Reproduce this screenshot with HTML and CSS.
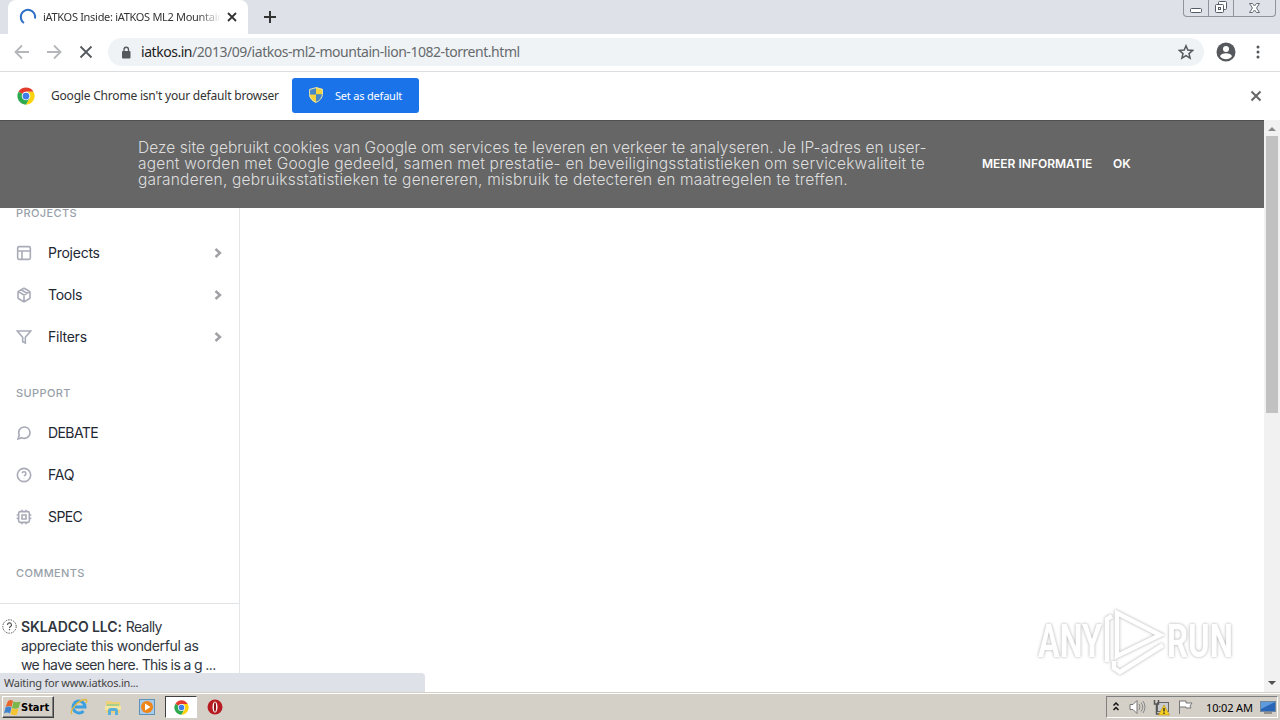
FILE: index.html
```html
<!DOCTYPE html>
<html lang="nl">
<head>
    <meta charset="UTF-8">
    <meta name="viewport" content="width=device-width, initial-scale=1.0">
    <title>iATKOS Inside: iATKOS ML2 Mountain Lion</title>
    <link rel="stylesheet" href="styles.css">
</head>
<body>
    <!-- Shared icon shapes -->
    <svg class="defs" width="0" height="0">
        <symbol id="chrome" viewBox="0 0 48 48">
            <circle cx="24" cy="24" r="23" fill="#fff"/>
            <path d="M24 24 4.1 12.5A23 23 0 0 1 43.9 12.5H24z" fill="#e33b2e"/>
            <path d="M24 24 4.1 12.5A23 23 0 0 0 24 47L34 29.8z" fill="#2da94f"/>
            <path d="M24 12.5h19.9A23 23 0 0 1 24 47l10-17.2z" fill="#fdd20a"/>
            <circle cx="24" cy="24" r="11.5" fill="#fff"/>
            <circle cx="24" cy="24" r="9" fill="#3f7ee8"/>
        </symbol>
        <symbol id="chevron" viewBox="0 0 8 10">
            <path d="M1.5 1 6 5 1.5 9" fill="none" stroke="#a0a0a5" stroke-width="2.4"/>
        </symbol>
    </svg>

    <header class="tab-strip">
        <div class="tab">
            <svg class="spinner" width="18" height="18" viewBox="0 0 18 18"><path d="M5 15A7.2 7.2 0 1 1 16 10.5" fill="none" stroke="#2f6fc6" stroke-width="2"/></svg>
            <span class="tab-title">iATKOS Inside: iATKOS ML2 Mountain</span>
            <svg width="10" height="10" viewBox="0 0 10 10"><path d="M1 1l8 8M9 1 1 9" stroke="#333" stroke-width="1.8"/></svg>
        </div>
        <svg class="new-tab" width="14" height="14" viewBox="0 0 14 14"><path d="M7 1v12M1 7h12" stroke="#333" stroke-width="2"/></svg>
        <div class="window-buttons">
            <span><svg width="14" height="7" viewBox="0 0 14 7"><rect x="1.5" y="1.5" width="11" height="4" rx="1" fill="#fff" stroke="#555b66"/></svg></span>
            <span><svg width="14" height="14" viewBox="0 0 14 14" fill="#fff" stroke="#555b66"><rect x="4.5" y="1.5" width="8" height="8" rx="1"/><rect x="1.5" y="4.5" width="8" height="8" rx="1"/><rect x="4.5" y="7.5" width="2" height="2"/></svg></span>
            <span class="win-close"><svg width="13" height="12" viewBox="0 0 13 12"><path d="M1.5 1.5h3l2 2.5 2-2.500h3L8.500 6l3 4.500h-3l-2-2.500-2 2.500h-3l3-4.500z" fill="#fff" stroke="#666b75"/></svg></span>
        </div>
    </header>

    <div class="toolbar">
        <svg width="16" height="16" viewBox="0 0 16 16"><path d="M15 8H2M8 1.5 1.5 8 8 14.5" fill="none" stroke="#b4b6b9" stroke-width="1.8"/></svg>
        <svg width="16" height="16" viewBox="0 0 16 16"><path d="M1 8h13M8 1.5 14.5 8 8 14.5" fill="none" stroke="#b4b6b9" stroke-width="1.8"/></svg>
        <svg width="16" height="16" viewBox="0 0 16 16"><path d="M2.5 2.5l11 11M13.5 2.5l-11 11" stroke="#55585c" stroke-width="1.8"/></svg>
        <div class="address">
            <svg width="10" height="13" viewBox="0 0 10 13"><rect x="1" y="5" width="8.5" height="7.5" rx="1" fill="#55585c"/><path d="M3 5.5V3.5a2.25 2.25 0 0 1 4.5 0v2" fill="none" stroke="#55585c" stroke-width="1.3"/></svg>
            <span class="url"><b>iatkos.in</b>/2013/09/iatkos-ml2-mountain-lion-1082-torrent.html</span>
            <svg width="16" height="16" viewBox="0 0 16 16"><path d="M8 1.8l1.8 4.3 4.7.4L11 9.6l1.1 4.6L8 11.7l-4.1 2.5L5 9.6 1.5 6.5l4.7-.4z" fill="none" stroke="#55585c" stroke-width="1.5"/></svg>
        </div>
        <svg class="profile" width="20" height="20" viewBox="0 0 20 20"><circle cx="10" cy="10" r="9.5" fill="#55585c"/><circle cx="10" cy="7" r="3" fill="#fff"/><path d="M4 14.2c1-4 11-4 12 0A7.3 7.3 0 0 1 4 14.2z" fill="#fff"/></svg>
        <svg class="dots" width="4" height="14" viewBox="0 0 4 14" fill="#55585c"><circle cx="2" cy="2" r="1.5"/><circle cx="2" cy="7" r="1.5"/><circle cx="2" cy="12" r="1.5"/></svg>
    </div>

    <div class="infobar">
        <svg width="18" height="18"><use href="#chrome"/></svg>
        <span class="infobar-text">Google Chrome isn't your default browser</span>
        <button class="default-button">
            <svg width="14" height="16" viewBox="0 0 14 16"><path d="M7 0 14 2v5.5H7z" fill="#f6d33c"/><path d="M7 0 0 2v5.5h7z" fill="#4687c8"/><path d="M0 7.5h7V16C3 14 .5 11.5 0 7.5z" fill="#f6d33c"/><path d="M14 7.5H7V16c4-2 6.5-4.5 7-8.5z" fill="#4687c8"/><path d="M7 .7 13.4 2.5v5C13.2 11 11 13.5 7 15.4 3 13.5.8 11 .6 7.5v-5z" fill="none" stroke="#e5e2b0" stroke-width="1"/></svg>
            <span>Set as default</span>
        </button>
        <svg class="infobar-close" width="12" height="12" viewBox="0 0 12 12"><path d="M1.5 1.5l9 9M10.5 1.5l-9 9" stroke="#666" stroke-width="2"/></svg>
    </div>

    <main class="viewport">
        <div class="page">
            <div class="cookie-bar">
                <p class="cookie-text">
                    <span class="c1">Deze site gebruikt cookies van Google om services te leveren en verkeer te analyseren. Je IP-adres en user-</span><br>
                    <span class="c2">agent worden met Google gedeeld, samen met prestatie- en beveiligingsstatistieken om servicekwaliteit te</span><br>
                    <span class="c3">garanderen, gebruiksstatistieken te genereren, misbruik te detecteren en maatregelen te treffen.</span>
                </p>
                <a class="more">MEER INFORMATIE</a>
                <a class="ok">OK</a>
            </div>

            <aside class="sidebar">
                <h3>PROJECTS</h3>
                <nav>
                    <a>
                        <svg width="16" height="16" viewBox="0 0 24 24"><rect x="2.5" y="2.5" width="19" height="19" rx="2"/><path d="M2.5 9h19M9 21.5V9"/></svg>
                        <span>Projects</span><svg class="chevron" width="8" height="10"><use href="#chevron"/></svg>
                    </a>
                    <a>
                        <svg width="16" height="16" viewBox="0 0 24 24"><path d="M21 16V8a2 2 0 0 0-1-1.7l-7-4a2 2 0 0 0-2 0l-7 4A2 2 0 0 0 3 8v8a2 2 0 0 0 1 1.7l7 4a2 2 0 0 0 2 0l7-4a2 2 0 0 0 1-1.7zM3.3 7l8.7 5 8.7-5M12 22V12M7.5 4.2l9 5.2"/></svg>
                        <span>Tools</span><svg class="chevron" width="8" height="10"><use href="#chevron"/></svg>
                    </a>
                    <a>
                        <svg width="16" height="16" viewBox="0 0 24 24"><path d="M22 3H2l8 9.5V19l4 2v-8.5z"/></svg>
                        <span>Filters</span><svg class="chevron" width="8" height="10"><use href="#chevron"/></svg>
                    </a>
                </nav>
                <h3>SUPPORT</h3>
                <nav>
                    <a>
                        <svg width="16" height="16" viewBox="0 0 24 24"><path d="M21 11.5a8.4 8.4 0 0 1-.9 3.8 8.500 8.500 0 0 1-7.600 4.700 8.400 8.400 0 0 1-3.800-.9L3 21l1.900-5.700a8.400 8.400 0 0 1-.9-3.800 8.500 8.500 0 0 1 4.700-7.600 8.400 8.400 0 0 1 3.800-.9h.5a8.500 8.500 0 0 1 8 8z"/></svg>
                        <span class="caps">DEBATE</span>
                    </a>
                    <a>
                        <svg width="16" height="16" viewBox="0 0 24 24"><circle cx="12" cy="12" r="10"/><path d="M9.1 9a3 3 0 0 1 5.8 1c0 2-3 3-3 3M12 17v.2"/></svg>
                        <span>FAQ</span>
                    </a>
                    <a>
                        <svg width="16" height="16" viewBox="0 0 24 24"><rect x="4" y="4" width="16" height="16" rx="2"/><path d="M9 9h6v6H9zM9 1v3M15 1v3M9 20v3M15 20v3M20 9h3M20 14h3M1 9h3M1 14h3"/></svg>
                        <span class="caps">SPEC</span>
                    </a>
                </nav>
                <h3>COMMENTS</h3>
                <div class="comment">
                    <svg width="15" height="15" viewBox="0 0 15 15"><circle cx="7.5" cy="7.5" r="6.7" fill="none" stroke="#555" stroke-dasharray="1.5 1"/><path d="M5.5 6a2 2 0 1 1 3 1.6c-.7.4-1 .7-1 1.4M7.5 10v1.3" fill="none" stroke="#555" stroke-width="1.2"/></svg>
                    <p><b>SKLADCO LLC:</b> <span class="l1">Really</span><br><span class="l2">appreciate this wonderful as</span><br><span class="l3">we have seen here. This is a g ...</span></p>
                </div>
            </aside>
        </div>

        <div class="scrollbar">
            <svg width="16" height="15" viewBox="0 0 16 15"><path d="M4 11h8L8 7z" fill="#8b8b8b"/></svg>
            <div class="thumb"></div>
            <svg class="down" width="16" height="17" viewBox="0 0 16 17"><path d="M4 6h8l-4 4z" fill="#505050"/></svg>
        </div>

        <div class="status">Waiting for www.iatkos.in...</div>

        <svg class="watermark" width="204" height="70" viewBox="0 0 204 70">
            <g fill="#fff">
                <text x="4" y="52" textLength="64" lengthAdjust="spacingAndGlyphs">ANY</text>
                <text x="133" y="52" textLength="66" lengthAdjust="spacingAndGlyphs">RUN</text>
            </g>
            <g fill="none" stroke="#fff" stroke-width="4.5">
                <path d="M83 8v43l43-21z"/>
                <path d="M78 11l-5 3v43"/>
                <path d="M80 56v7l6 4 43-27"/>
            </g>
        </svg>
    </main>

    <footer class="taskbar">
        <div class="start">
            <svg width="17" height="17" viewBox="0 0 17 17"><path d="M4 2q3-2 5 0L7.5 8q-2-2-6 0z" fill="#e8652b"/><path d="M9.5 2.5q3 1.500 7 0L14.500 9q-3 1.500-6.500 0z" fill="#7ab648"/><path d="M1.500 8.500q3-2 6 0L6 14.500q-3-2-6 0z" fill="#3f83cf"/><path d="M8 9q3 2 6.500.5L13 15.500q-3 1.500-6.500-.5z" fill="#f5c433"/></svg>
            <span>Start</span>
        </div>
        <div class="apps">
            <span class="app"><svg width="18" height="18" viewBox="0 0 18 18"><path d="M13.5 13A6 6 0 1 1 15 9H5" fill="none" stroke="#3ba0df" stroke-width="3"/><path d="M2 16C-1 13 8 2 15 1.5q3 0 1 3.5" fill="none" stroke="#e6b83a" stroke-width="1.3"/></svg></span>
            <span class="app"><svg width="18" height="18" viewBox="0 0 18 18"><path d="M2 3h5l1 1h8v11H2z" fill="#eed078"/><path d="M3 6h12v3H3z" fill="#a9cf8b"/><path d="M1 8h16v4H1z" fill="#f7e6a0"/><path d="M4 17v-4q0-3 3-3h4q3 0 3 3v4h-3v-4H7v4z" fill="#5aaedb"/></svg></span>
            <span class="app"><svg width="16" height="16" viewBox="0 0 16 16"><rect x=".5" y=".5" width="15" height="15" fill="#a7cbe8" stroke="#5d92bd"/><circle cx="8" cy="8" r="6" fill="#ef8519"/><path d="M6 4.5v7L11.5 8z" fill="#fff"/></svg></span>
            <span class="app active"><svg width="15" height="15"><use href="#chrome"/></svg></span>
            <span class="app"><svg width="16" height="16" viewBox="0 0 16 16"><circle cx="8" cy="8" r="7.5" fill="#b71a20"/><ellipse cx="8" cy="8" rx="2.5" ry="5.5" fill="#fff"/><ellipse cx="8" cy="8" rx="1.1" ry="4.7" fill="#8f1318"/></svg></span>
        </div>
        <div class="tray">
            <svg width="8" height="12" viewBox="0 0 8 12"><path d="M1.5 4.500l2.500-2.500 2.500 2.500M1.500 9l2.500-2.500L6.500 9" fill="none" stroke="#111" stroke-width="1.5"/></svg>
            <svg class="sound" width="17" height="16" viewBox="0 0 17 16"><path d="M1 5.5h3l4-4v13l-4-4H1z" fill="#fff" stroke="#777"/><path d="M10 5q2 3 0 6M12 3.5q3.5 4.5 0 9M14 2q4 6 0 12" fill="none" stroke="#888"/></svg>
            <svg class="network" width="17" height="17" viewBox="0 0 17 17"><rect x="4.5" y="3.5" width="11" height="9" fill="#c8ccd0" stroke="#666"/><path d="M1.5 1v4h4V1M3.5 5v10H7" fill="none" stroke="#555" stroke-width="1.5"/><path d="M11 6l5.5 10h-11z" fill="#f7cf22" stroke="#b99012" stroke-width=".6"/><path d="M11 9v3.5M11 13.5V15" stroke="#222" stroke-width="1.3"/></svg>
            <svg class="flag" width="17" height="16" viewBox="0 0 17 16"><path d="M2.5 15V1.5M3 2h6v2h6l-2 3 1 2H9V8H3" fill="#fff" stroke="#777"/></svg>
            <span class="clock">10:02 AM</span>
            <svg class="desktop" width="16" height="13" viewBox="0 0 16 13"><rect x=".5" y=".5" width="15" height="10" fill="#2966b8" stroke="#71879d"/><path d="M1 1h14L1 8z" fill="#5e9bdd"/><path d="M4 12h8" stroke="#555"/></svg>
        </div>
    </footer>
</body>
</html>
```
FILE: styles.css
```css
* {
    box-sizing: border-box;
}

body {
    margin: 0;
    width: 1280px;
    height: 720px;
    display: flex;
    flex-direction: column;
    overflow: hidden;
    background: #fff;
    font-family: "Noto Sans", sans-serif;
    font-size: 12px;
    color: #333;
    white-space: nowrap;
}

svg {
    display: block;
    flex: none;
}

.defs {
    position: absolute;
}

/* Tab strip */
.tab-strip {
    display: flex;
    height: 34px;
    flex: none;
    background: #dee1e7;
}

.tab {
    display: flex;
    align-items: center;
    width: 240px;
    margin-left: 8px;
    padding-left: 11px;
    background: #fff;
    border-radius: 8px 8px 0 0;
}

.tab-title {
    width: 177px;
    margin: -2px 7px 0 6px;
    overflow: hidden;
    font-size: 11px;
    letter-spacing: -0.3px;
    -webkit-mask-image: linear-gradient(to right, #000 155px, transparent 178px);
    mask-image: linear-gradient(to right, #000 155px, transparent 178px);
}

.new-tab {
    margin: 10px 0 0 15px;
}

.window-buttons {
    display: flex;
    height: 17px;
    margin: 0 4px 0 auto;
    border: 1px solid #8e949e;
    border-top: 0;
    border-radius: 0 0 4px 4px;
}

.window-buttons span {
    display: flex;
    width: 25px;
    align-items: flex-end;
    justify-content: center;
    padding-bottom: 2px;
    border-right: 1px solid #8e949e;
}

.window-buttons .win-close {
    width: 41px;
    border: 0;
}

/* Toolbar */
.toolbar {
    display: flex;
    align-items: center;
    gap: 16px;
    height: 38px;
    flex: none;
    padding: 0 19px 1px 14px;
    border-bottom: 1px solid #dcdddf;
}

.address {
    display: flex;
    align-items: center;
    width: 1096px;
    height: 28px;
    margin-left: -2px;
    padding: 0 10px 0 13px;
    border-radius: 14px;
    background: #f0f3f5;
}

.url {
    flex: 1;
    margin: -2px 0 0 10px;
    font-size: 14px;
    letter-spacing: -0.46px;
    color: #666a6e;
}

.url b {
    font-weight: 400;
    color: #222;
}

.profile {
    margin-left: -4px;
}

.dots {
    margin-left: 4px;
}

/* Default browser bar */
.infobar {
    display: flex;
    align-items: center;
    height: 48px;
    flex: none;
    padding: 0 18px 0 17px;
}

.infobar-text {
    width: 228px;
    margin: -2px 13px 0 16px;
    letter-spacing: -0.2px;
}

.default-button {
    display: flex;
    align-items: center;
    gap: 12px;
    width: 127px;
    height: 35px;
    margin-top: -1px;
    padding: 0 0 1px 17px;
    border: 0;
    border-radius: 3px;
    background: #1a73e8;
    color: #fff;
    font: 11px "Noto Sans", sans-serif;
    letter-spacing: -0.2px;
}

.infobar-close {
    margin-left: auto;
}

/* Web page */
.viewport {
    position: relative;
    display: flex;
    height: 572px;
    flex: none;
    overflow: hidden;
    font-family: Inter, sans-serif;
}

.page {
    width: 1264px;
}

.cookie-bar {
    display: flex;
    align-items: center;
    height: 88px;
    padding: 0 0 2px 138px;
    background: #666;
    border-top: 1px solid #505050;
    color: #dedede;
}

.cookie-text {
    width: 844px;
    margin: 0;
    font-size: 15.5px;
    font-weight: 300;
    line-height: 16px;
}

.c1 {
    letter-spacing: 0.06px;
}

.c2,
.c3 {
    letter-spacing: 0.21px;
}

.more,
.ok {
    font-size: 12px;
    font-weight: 600;
    color: #fff;
}

.more {
    width: 131px;
}

.sidebar {
    width: 240px;
    height: 484px;
    border-right: 1px solid #e3e5e8;
    overflow: hidden;
}

.sidebar h3 {
    margin: 30px 0 14px 16px;
    font-size: 11px;
    line-height: 10px;
    font-weight: 500;
    letter-spacing: 0.38px;
    color: #989fa9;
}

.sidebar h3:first-child {
    margin-top: 0;
}

.sidebar nav a {
    display: flex;
    align-items: center;
    gap: 16px;
    height: 42px;
    padding: 0 17px 0 16px;
    font-size: 14px;
    letter-spacing: -0.25px;
    color: #1e2733;
}

.sidebar nav span {
    margin-top: -2px;
}

.sidebar nav .caps {
    letter-spacing: -0.6px;
}

.sidebar nav svg {
    fill: none;
    stroke: #a9abb8;
    stroke-width: 2.4;
}

.sidebar nav .chevron {
    margin-left: auto;
}

.comment {
    display: flex;
    gap: 3px;
    margin-top: 25px;
    padding: 13px 0 0 3px;
    border-top: 1px solid #e0e4e6;
    color: #303640;
}

.comment svg {
    margin: 2px 0 0 -1px;
}

.comment p {
    margin: 0 0 0 1px;
    font-size: 14px;
    line-height: 19px;
}

.comment b {
    font-weight: 600;
    letter-spacing: -0.1px;
}

.l1 {
    letter-spacing: -0.6px;
}

.l2 {
    letter-spacing: -0.36px;
}

.l3 {
    letter-spacing: -0.62px;
}

.sidebar h3:last-of-type {
    margin-bottom: 0;
}

.scrollbar {
    width: 16px;
    display: flex;
    flex-direction: column;
    background: #f1f1f1;
}

.thumb {
    height: 277px;
    margin: 1px 2px 0;
    background: #c1c1c1;
}

.scrollbar .down {
    margin-top: auto;
}

.status {
    position: absolute;
    left: 0;
    bottom: 0;
    width: 425px;
    height: 19px;
    padding-left: 4px;
    border-radius: 0 4px 0 0;
    background: #dee1e7;
    color: #444;
    font: 11px/19px "Noto Sans", sans-serif;
    letter-spacing: -0.23px;
}

.watermark {
    position: absolute;
    left: 1034px;
    top: 485px;
    filter: drop-shadow(0 0 1.5px #aaa);
    font-family: Roboto, sans-serif;
    font-size: 47px;
    font-weight: 700;
}

/* Taskbar */
.taskbar {
    display: flex;
    align-items: center;
    flex: 1;
    padding: 1px 0 0 2px;
    border-top: 1px solid #d4d0c8;
    box-shadow: inset 0 1px #fff;
    background: #d4cfc7;
    color: #000;
}

.start {
    display: flex;
    align-items: center;
    width: 52px;
    height: 22px;
    padding-left: 1px;
    border: 1px solid;
    border-color: #fff #404040 #404040 #fff;
    box-shadow: inset -1px -1px #808080;
    font: bold 11px "DejaVu Sans Condensed", sans-serif;
}

.apps {
    display: flex;
    gap: 2px;
    margin-left: 9px;
}

.app {
    display: flex;
    align-items: center;
    justify-content: center;
    width: 32px;
    height: 22px;
}

.app.active {
    background: #fff;
    border: 1px solid;
    border-color: #404040 #fff #fff #404040;
}

.tray {
    display: flex;
    align-items: center;
    width: 172px;
    height: 22px;
    margin: 0 2px 0 auto;
    padding-left: 5px;
    border: 1px solid;
    border-color: #808080 #fff #fff #808080;
}

.sound {
    margin-left: 9px;
}

.network {
    margin-left: 7px;
}

.flag {
    margin-left: 7px;
}

.clock {
    width: 47px;
    margin: 0 7px 0 12px;
    font-size: 11px;
    letter-spacing: -0.15px;
}
```
